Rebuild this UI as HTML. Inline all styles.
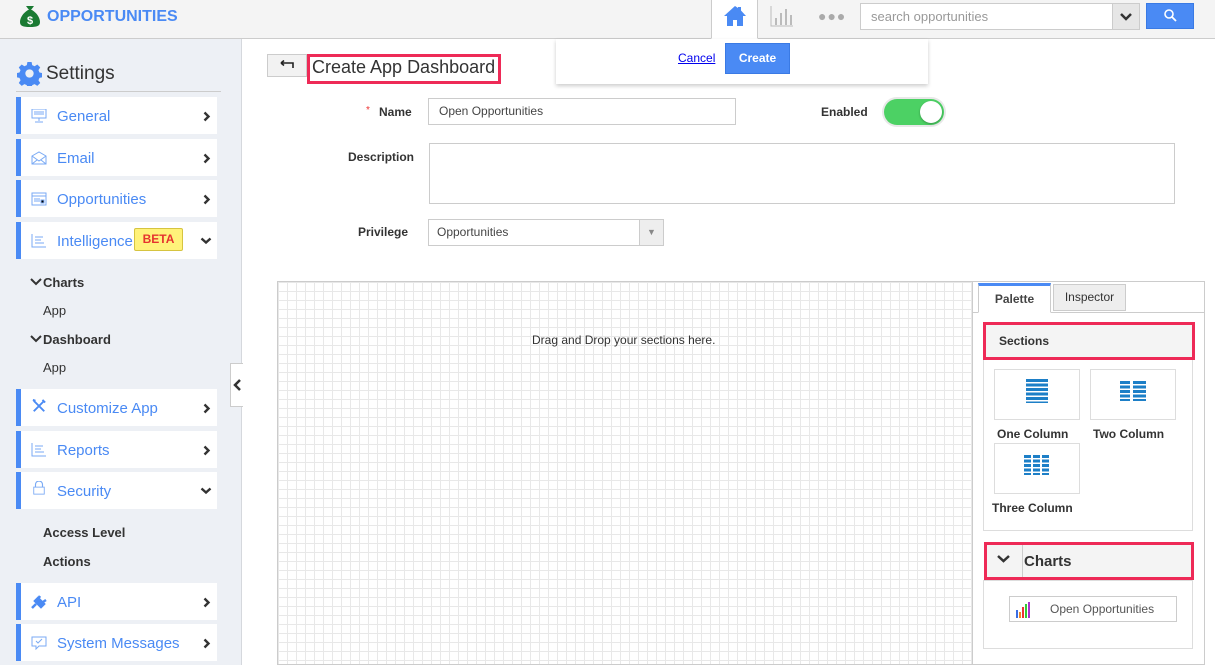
<!DOCTYPE html>
<html><head><style>
*{box-sizing:border-box;margin:0;padding:0}
body{width:1215px;height:665px;overflow:hidden;font-family:"Liberation Sans",sans-serif;background:#fff;position:relative;color:#333}
.abs{position:absolute}
.hdr{left:0;top:0;width:1215px;height:39px;background:#f4f4f4;border-bottom:1px solid #ccc}
.side{left:0;top:39px;width:242px;height:626px;background:#edf0f5;border-right:1px solid #d5d8dd}
.mi{position:absolute;left:16px;width:201px;height:37px;background:#fff;border-left:5px solid #4a8af4;font-size:15px;color:#4a8af4;line-height:40px;padding-left:36px}
.mi .ic{position:absolute;left:10px;top:12px;width:16px;height:14px}
.mi .cv{position:absolute;right:6px;top:14px}
.sub{position:absolute;font-size:13px;color:#333}
.lbl{position:absolute;font-size:12px;font-weight:bold;color:#333}
.inp{position:absolute;border:1px solid #ccc;background:#fff;font-size:12px;color:#444;padding-left:10px}
.red{position:absolute;border:3px solid #ee2a57}
.tile{position:absolute;width:86px;height:51px;border:1px solid #ddd;background:#fff}
.tl{position:absolute;font-size:12px;font-weight:bold;color:#333}
</style></head><body>
<div class="abs hdr"></div>
<svg class="abs" style="left:19px;top:4px" width="22" height="24" viewBox="0 0 22 24"><path d="M7 2h8l-3 4h-2zM9 6h4c5 3 8 8 8 12 0 4-3 5-10 5S1 22 1 18c0-4 3-9 8-12z" fill="#1a7a32"/><text x="11" y="20" font-size="11" fill="#fff" text-anchor="middle" font-family="Liberation Sans" font-weight="bold">$</text></svg>
<div class="abs" style="left:47px;top:8px;font-size:16px;font-weight:bold;color:#4a8af4">OPPORTUNITIES</div>
<div class="abs" style="left:711px;top:0;width:47px;height:39px;background:#fff;border-left:1px solid #ccc;border-right:1px solid #ccc;border-bottom:1px solid #fff"></div>
<svg class="abs" style="left:723px;top:5px" width="24" height="22" viewBox="0 0 24 22"><path d="M12 1L1 11h3v10h6v-6h4v6h6V11h3L18 5.5V2h-3v1z" fill="#4a8af4"/></svg>
<svg class="abs" style="left:770px;top:5px" width="24" height="22" viewBox="0 0 24 22"><path d="M1 1v20h22" stroke="#bbb" fill="none"/><rect x="5" y="13" width="2" height="7" fill="#bbb"/><rect x="10" y="8" width="2" height="12" fill="#bbb"/><rect x="15" y="4" width="2" height="16" fill="#bbb"/><rect x="20" y="10" width="2" height="10" fill="#bbb"/></svg>
<div class="abs" style="left:818px;top:8px;font-size:14px;color:#aaa;letter-spacing:1px">●●●</div>
<div class="abs" style="left:860px;top:3px;width:280px;height:27px;background:#fff;border:1px solid #ccc;font-size:13px;color:#999;line-height:25px;padding-left:10px">search opportunities</div>
<div class="abs" style="left:1112px;top:4px;width:27px;height:25px;background:#e6e6e6;border-left:1px solid #ccc"></div>
<svg class="abs" style="left:1119px;top:12px" width="14" height="10"><path d="M2 2l5 5 5-5" stroke="#333" stroke-width="2.5" fill="none"/></svg>
<div class="abs" style="left:1146px;top:3px;width:48px;height:26px;background:#4a8af4;border:1px solid #3a7ae4"></div>
<svg class="abs" style="left:1163px;top:8px" width="14" height="14"><circle cx="6" cy="6" r="4" stroke="#fff" stroke-width="1.6" fill="none"/><path d="M9 9l4 4" stroke="#fff" stroke-width="1.8"/></svg>
<div class="abs" style="left:556px;top:39px;width:372px;height:45px;background:#fff;box-shadow:0 2px 4px rgba(0,0,0,.2)"></div>
<div class="abs" style="left:678px;top:51px;font-size:12px;color:#00e;text-decoration:underline">Cancel</div>
<div class="abs" style="left:725px;top:43px;width:65px;height:31px;background:#4a8af4;border:1px solid #3a7ae4;color:#fff;font-size:12px;font-weight:bold;text-align:center;line-height:29px">Create</div>

<div class="abs side"></div>
<svg class="abs" style="left:17px;top:61px" width="25" height="25" viewBox="0 0 24 24"><path fill="#4a8af4" d="M10 1h4l.6 3 2.3 1 2.6-1.7 2.8 2.8-1.7 2.6 1 2.3 3 .6v4l-3 .6-1 2.3 1.7 2.6-2.8 2.8-2.6-1.7-2.3 1-.6 3h-4l-.6-3-2.3-1-2.6 1.7-2.8-2.8 1.7-2.6-1-2.3-3-.6v-4l3-.6 1-2.3-1.7-2.6 2.8-2.8 2.6 1.7 2.3-1zM12 8a4 4 0 100 8 4 4 0 000-8z"/></svg>
<div class="abs" style="left:46px;top:63px;font-size:19px;color:#333">Settings</div>
<div class="abs" style="left:16px;top:91px;width:205px;height:1px;background:#ccc"></div>

<div class="mi" style="top:97px"><svg class="ic" viewBox="0 0 16 14"><rect x="1" y="0" width="14" height="9" fill="none" stroke="#7aaaf4"/><path d="M3 3h10M3 5h10M8 9v3M4 13h8" stroke="#7aaaf4"/></svg>General<svg class="cv" width="8" height="11"><path d="M1.5 1.5l4 4-4 4" stroke="#333" stroke-width="2.4" fill="none"/></svg></div>
<div class="mi" style="top:139px"><svg class="ic" viewBox="0 0 16 14"><path d="M1 5l7-4 7 4v8H1zM1 5l7 5 7-5M1 13l5-4M15 13l-5-4" fill="none" stroke="#7aaaf4"/></svg>Email<svg class="cv" width="8" height="11"><path d="M1.5 1.5l4 4-4 4" stroke="#333" stroke-width="2.4" fill="none"/></svg></div>
<div class="mi" style="top:180px"><svg class="ic" viewBox="0 0 16 14"><rect x="1" y="1" width="14" height="12" fill="none" stroke="#7aaaf4"/><path d="M1 4h14M3 7h6M3 9h6M10 8h3v3h-3z" stroke="#7aaaf4"/></svg>Opportunities<svg class="cv" width="8" height="11"><path d="M1.5 1.5l4 4-4 4" stroke="#333" stroke-width="2.4" fill="none"/></svg></div>
<div class="mi" style="top:222px"><svg class="ic" viewBox="0 0 16 14"><path d="M1 0v13h14M4 3h8M4 6h6M4 9h9" stroke="#7aaaf4" fill="none"/></svg>Intelligence<span style="position:absolute;left:113px;top:6px;height:23px;width:49px;background:#fff27a;border:1px solid #d6c440;border-radius:2px;color:#e5342f;font-size:12px;font-weight:bold;line-height:21px;text-align:center">BETA</span><svg class="cv" style="top:15px;right:5px" width="12" height="8"><path d="M1.5 1.5l4.5 4 4.5-4" stroke="#333" stroke-width="2.4" fill="none"/></svg></div>
<svg class="abs" style="left:30px;top:278px" width="12" height="9"><path d="M1 1l5 5 5-5" stroke="#333" stroke-width="2" fill="none"/></svg>
<div class="sub" style="left:43px;top:275px;font-weight:bold">Charts</div>
<div class="sub" style="left:43px;top:303px">App</div>
<svg class="abs" style="left:30px;top:335px" width="12" height="9"><path d="M1 1l5 5 5-5" stroke="#333" stroke-width="2" fill="none"/></svg>
<div class="sub" style="left:43px;top:332px;font-weight:bold">Dashboard</div>
<div class="sub" style="left:43px;top:360px">App</div>
<div class="mi" style="top:389px"><svg class="ic" style="top:10px" viewBox="0 0 16 16"><path d="M2 2l12 12M14 2L2 14M1 1l3 1M12 1l3 3" stroke="#4a8af4" stroke-width="2.2" fill="none"/></svg>Customize App<svg class="cv" width="8" height="11"><path d="M1.5 1.5l4 4-4 4" stroke="#333" stroke-width="2.4" fill="none"/></svg></div>
<div class="mi" style="top:431px"><svg class="ic" viewBox="0 0 16 14"><path d="M1 0v13h14M4 3h8M4 6h6M4 9h9" stroke="#7aaaf4" fill="none"/></svg>Reports<svg class="cv" width="8" height="11"><path d="M1.5 1.5l4 4-4 4" stroke="#333" stroke-width="2.4" fill="none"/></svg></div>
<div class="mi" style="top:472px"><svg class="ic" style="top:9px" viewBox="0 0 16 16"><path d="M4 7V4a4 4 0 018 0v3" stroke="#7aaaf4" stroke-width="1.3" fill="none"/><rect x="2" y="7" width="12" height="8" fill="none" stroke="#7aaaf4"/></svg>Security<svg class="cv" style="top:15px;right:5px" width="12" height="8"><path d="M1.5 1.5l4.5 4 4.5-4" stroke="#333" stroke-width="2.4" fill="none"/></svg></div>
<div class="sub" style="left:43px;top:525px;font-weight:bold">Access Level</div>
<div class="sub" style="left:43px;top:554px;font-weight:bold">Actions</div>
<div class="mi" style="top:583px"><svg class="ic" viewBox="0 0 16 14"><path d="M1 13l4-4M7 3l6 6-3 3-6-6zM9 1l-2 3M15 5l-3 2" stroke="#4a8af4" stroke-width="2.5" fill="#4a8af4"/></svg>API<svg class="cv" width="8" height="11"><path d="M1.5 1.5l4 4-4 4" stroke="#333" stroke-width="2.4" fill="none"/></svg></div>
<div class="mi" style="top:624px"><svg class="ic" viewBox="0 0 16 14"><path d="M1 1h14v9H8l-3 3v-3H1z" fill="none" stroke="#7aaaf4"/><path d="M5 5l2 2 4-4" stroke="#7aaaf4" fill="none"/></svg>System Messages<svg class="cv" width="8" height="11"><path d="M1.5 1.5l4 4-4 4" stroke="#333" stroke-width="2.4" fill="none"/></svg></div>
<div class="abs" style="left:230px;top:363px;width:13px;height:44px;background:#fff;border:1px solid #ccc;border-right:none"></div>
<svg class="abs" style="left:233px;top:379px" width="9" height="12"><path d="M7 1L2 6l5 5" stroke="#333" stroke-width="2.5" fill="none"/></svg>

<div class="abs" style="left:267px;top:54px;width:40px;height:23px;background:#f2f2f2;border:1px solid #ccc"></div>
<svg class="abs" style="left:279px;top:60px" width="16" height="10"><path d="M2 3h12v5M2 3l3-2.5M2 3l3 2.5" stroke="#222" stroke-width="1.6" fill="none"/></svg>
<div class="red" style="left:307px;top:54px;width:194px;height:30px"></div>
<div class="abs" style="left:312px;top:57px;font-size:18px;color:#333">Create App Dashboard</div>
<div class="abs" style="left:366px;top:105px;font-size:10px;color:#e33">*</div>
<div class="lbl" style="left:379px;top:105px">Name</div>
<div class="inp" style="left:428px;top:98px;width:308px;height:27px;line-height:25px">Open Opportunities</div>
<div class="lbl" style="left:821px;top:105px">Enabled</div>
<div class="abs" style="left:884px;top:99px;width:60px;height:26px;border-radius:13px;background:#4cd164;box-shadow:0 0 0 2px #e8e8e8"></div>
<div class="abs" style="left:920px;top:101px;width:22px;height:22px;border-radius:11px;background:#fff;box-shadow:0 1px 2px rgba(0,0,0,.3)"></div>
<div class="lbl" style="left:348px;top:150px">Description</div>
<div class="inp" style="left:429px;top:143px;width:746px;height:61px"></div>
<div class="lbl" style="left:358px;top:225px">Privilege</div>
<div class="inp" style="left:428px;top:219px;width:236px;height:27px;line-height:25px;padding-left:8px">Opportunities</div>
<div class="abs" style="left:639px;top:220px;width:24px;height:25px;background:#eee;border-left:1px solid #ccc;color:#888;font-size:9px;text-align:center;line-height:25px">&#x25BC;</div>

<div class="abs" style="left:277px;top:281px;width:696px;height:384px;border:1px solid #ccc;background-color:#fff;background-image:linear-gradient(#e8e8e8 1px,transparent 1px),linear-gradient(90deg,#e8e8e8 1px,transparent 1px);background-size:9px 9px"></div>
<div class="abs" style="left:532px;top:333px;font-size:12px;color:#333">Drag and Drop your sections here.</div>

<div class="abs" style="left:973px;top:281px;width:232px;height:384px;background:#fff;border:1px solid #ccc;border-left:none"></div>
<div class="abs" style="left:973px;top:312px;width:231px;height:1px;background:#ccc"></div>
<div class="abs" style="left:978px;top:283px;width:73px;height:30px;background:#fff;border:1px solid #ccc;border-top:3px solid #4a8af4;border-bottom:1px solid #fff;font-size:12px;font-weight:bold;color:#444;text-align:center;line-height:26px">Palette</div>
<div class="abs" style="left:1053px;top:284px;width:73px;height:27px;background:#eee;border:1px solid #ccc;font-size:12px;color:#333;text-align:center;line-height:25px">Inspector</div>
<div class="abs" style="left:983px;top:323px;width:210px;height:208px;border:1px solid #ddd"></div>
<div class="abs" style="left:984px;top:324px;width:210px;height:35px;background:#f4f4f4"></div>
<div class="red" style="left:983px;top:322px;width:212px;height:38px"></div>
<div class="abs" style="left:999px;top:334px;font-size:12px;font-weight:bold">Sections</div>
<div class="tile" style="left:994px;top:369px"></div>
<div class="abs" style="left:1026px;top:379px;width:22px;height:24px;background:repeating-linear-gradient(#1d7fc7 0 3px,#fff 3px 4.5px)"></div>
<div class="tile" style="left:1090px;top:369px"></div>
<div class="abs" style="left:1120px;top:381px;width:10px;height:20px;background:repeating-linear-gradient(#1d7fc7 0 3px,#fff 3px 4.5px)"></div>
<div class="abs" style="left:1133px;top:381px;width:13px;height:20px;background:repeating-linear-gradient(#1d7fc7 0 3px,#fff 3px 4.5px)"></div>
<div class="tl" style="left:997px;top:427px">One Column</div>
<div class="tl" style="left:1093px;top:427px">Two Column</div>
<div class="tile" style="left:994px;top:443px"></div>
<div class="abs" style="left:1024px;top:455px;width:7px;height:20px;background:repeating-linear-gradient(#1d7fc7 0 3px,#fff 3px 4.5px)"></div>
<div class="abs" style="left:1033px;top:455px;width:7px;height:20px;background:repeating-linear-gradient(#1d7fc7 0 3px,#fff 3px 4.5px)"></div>
<div class="abs" style="left:1042px;top:455px;width:7px;height:20px;background:repeating-linear-gradient(#1d7fc7 0 3px,#fff 3px 4.5px)"></div>
<div class="tl" style="left:992px;top:501px">Three Column</div>
<div class="abs" style="left:983px;top:580px;width:210px;height:69px;border:1px solid #ddd"></div>
<div class="abs" style="left:986px;top:544px;width:206px;height:35px;background:#f4f4f4"></div>
<div class="abs" style="left:1022px;top:545px;width:1px;height:33px;background:#ccc"></div>
<div class="red" style="left:984px;top:542px;width:210px;height:38px"></div>
<svg class="abs" style="left:997px;top:555px" width="13" height="9"><path d="M1 1l5.5 5 5.5-5" stroke="#333" stroke-width="2.5" fill="none"/></svg>
<div class="abs" style="left:1024px;top:553px;font-size:15px;font-weight:bold">Charts</div>
<div class="abs" style="left:1009px;top:596px;width:168px;height:26px;border:1px solid #ccc;background:#fff"></div>
<svg class="abs" style="left:1015px;top:601px" width="18" height="18"><rect x="1" y="9" width="2" height="8" fill="#3a6ee4"/><rect x="4" y="11" width="2" height="6" fill="#f08a24"/><rect x="7" y="6" width="2" height="11" fill="#e33"/><rect x="10" y="3" width="2" height="14" fill="#3c3"/><rect x="13" y="1" width="2" height="16" fill="#a3c"/></svg>
<div class="abs" style="left:1050px;top:602px;font-size:12px;color:#555">Open Opportunities</div>
</body></html>
